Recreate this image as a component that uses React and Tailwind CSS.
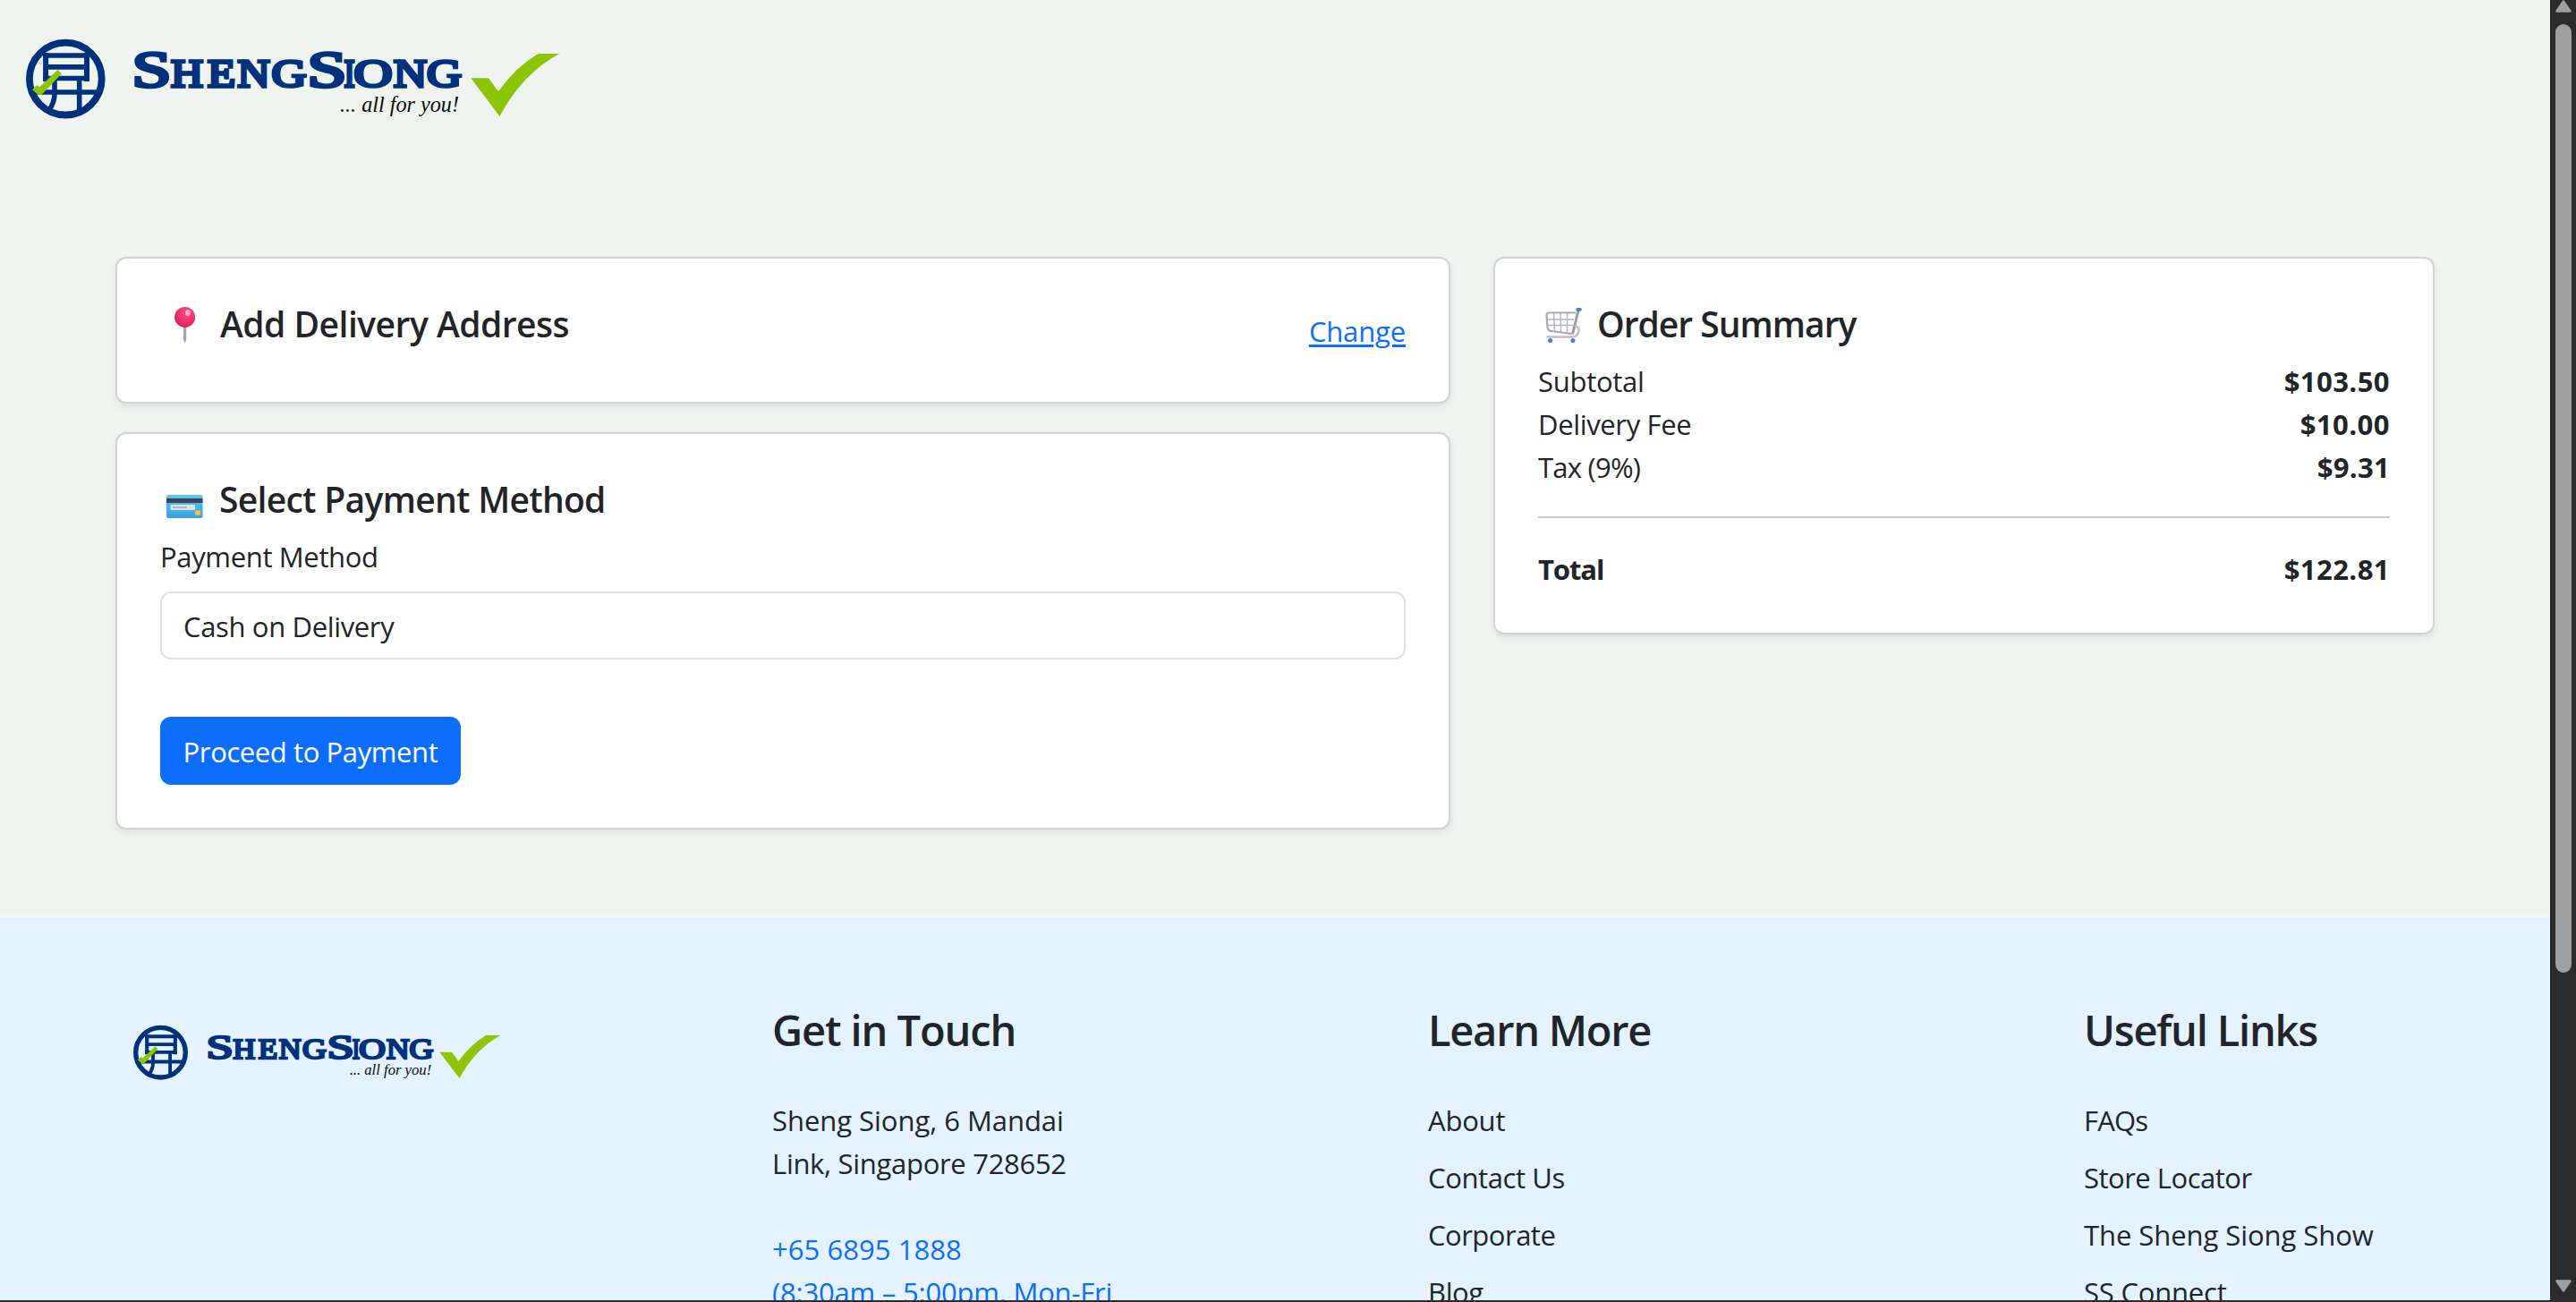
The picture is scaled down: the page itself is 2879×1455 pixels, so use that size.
import React from "react";

// Letter, left edge, advance width and font size of each wordmark glyph.
const WORDMARK = [
  ["S", 147.5, 44, 56],
  ["H", 191, 36, 45],
  ["E", 232, 31, 45],
  ["N", 265.5, 36, 45],
  ["G", 303.5, 39, 45],
  ["S", 343.5, 44, 56],
  ["I", 384.5, 12, 45],
  ["O", 395.5, 43, 45],
  ["N", 440, 37, 45],
  ["G", 477, 39, 45],
];

function Logo({ className }) {
  return (
    <svg viewBox="29 43 597 91" className={className}>
      <g fill="none" stroke="#00317c">
        <circle cx="73.3" cy="88.1" r="40.4" strokeWidth="7.8" />
        <path d="M51.1 91V59M97 91V59" strokeWidth="6" />
        <path d="M48 62H100M50 74.9H98M48 87.5H100M38 103H110M88.7 88V127" strokeWidth="5.6" />
        <path d="M61 90V105Q61 114 55 123" strokeWidth="5.6" />
      </g>
      <path d="M36 100.3L41.3 95.3L44.3 97.3L64.3 78L69 82.3L46.7 105.7H42.3Z" fill="#8cc503" />
      <text
        y="97.3"
        fill="#00317c"
        stroke="#00317c"
        strokeWidth="3.6"
        strokeLinejoin="miter"
        className="font-['Liberation_Serif',serif]"
      >
        {WORDMARK.map(([ch, x, w, size], i) => (
          <tspan key={i} x={x} textLength={w} lengthAdjust="spacingAndGlyphs" fontSize={size}>
            {ch}
          </tspan>
        ))}
      </text>
      <text
        x="380"
        y="124.7"
        fontSize="25"
        textLength="133"
        lengthAdjust="spacingAndGlyphs"
        fill="#0a0a0a"
        className="font-['Liberation_Serif',serif] italic"
      >
        ... all for you!
      </text>
      <path
        d="M526.3 87.3H546L557 102.2Q576 75 601.6 60H625.3Q584 82 558.4 130Z"
        fill="#8cc503"
      />
    </svg>
  );
}

function PinIcon() {
  return (
    <svg viewBox="0 0 55 48" className="h-12 w-[55px] shrink-0">
      <defs>
        <radialGradient id="pin" cx="0.6" cy="0.3" r="0.7">
          <stop offset="0" stopColor="#ff4a80" />
          <stop offset="0.6" stopColor="#f5316d" />
          <stop offset="1" stopColor="#c9285c" />
        </radialGradient>
      </defs>
      <path d="M26 28H29.2V43L27.7 46L26 43Z" fill="#a99db3" />
      <circle cx="27.6" cy="17.4" r="11.5" fill="url(#pin)" />
      <ellipse cx="31" cy="12.5" rx="3" ry="3.6" fill="#ffc4d8" opacity="0.85" />
    </svg>
  );
}

function CardIcon() {
  return (
    <svg viewBox="0 0 55 48" className="h-12 w-[55px] shrink-0">
      <defs>
        <linearGradient id="card" x1="0" y1="0" x2="0" y2="1">
          <stop offset="0" stopColor="#4fd0ee" />
          <stop offset="1" stopColor="#37a0e4" />
        </linearGradient>
      </defs>
      <rect x="7" y="20" width="40.5" height="26" rx="2.5" fill="url(#card)" />
      <rect x="7" y="24" width="40.5" height="5" fill="#483f58" />
      <rect x="11.5" y="31" width="27.5" height="6" rx="1" fill="#dfe0ea" />
      <path d="M14 34H30" stroke="#a29bab" strokeWidth="1.3" />
      <rect x="39" y="37.5" width="6" height="5.2" rx="1" fill="#f5c43a" />
    </svg>
  );
}

function CartIcon() {
  return (
    <svg viewBox="0 0 55 48" className="h-12 w-[55px] shrink-0" fill="none">
      <path d="M10.5 20H40M11 26.5H39M17.5 13L18.5 33M25 13L25.5 34M32.5 13L32.5 35" stroke="#b7b4bd" strokeWidth="1.5" />
      <path d="M42 12.5H13Q9.3 12.5 9.5 16L10.5 29Q11 32.5 14.5 33L37.5 36" stroke="#aaa7af" strokeWidth="2.2" />
      <path d="M45 10L38.5 36.5" stroke="#9c98a2" strokeWidth="3" />
      <path d="M41 27Q46.5 28 45.5 33Q44 39.5 38 39.5H9.5" stroke="#c6b9d2" strokeWidth="2.6" />
      <path d="M42.5 10L45.5 8" stroke="#8896b4" strokeWidth="3" />
      <rect x="42.8" y="7" width="6" height="3.8" rx="1.8" fill="#3f82d4" />
      <circle cx="13.5" cy="43.5" r="2.5" fill="#3f82d4" />
      <circle cx="39" cy="43.5" r="2.5" fill="#3f82d4" />
    </svg>
  );
}

function Card({ children }) {
  return (
    <section className="rounded-xl border-2 border-[#d2d3d3] bg-white p-12 shadow-[0_4px_8px_rgba(0,0,0,0.075)]">
      {children}
    </section>
  );
}

function CardTitle({ icon, children, className }) {
  return (
    <div className="mb-4 flex h-12">
      {icon}
      <h5 className={`h-12 text-[39px] leading-[50px] font-semibold ${className}`}>{children}</h5>
    </div>
  );
}

function Row({ label, value, labelClass = "", valueClass = "" }) {
  return (
    <div className="flex h-12 justify-between leading-[50px]">
      <span className={labelClass}>{label}</span>
      <span className={`font-bold ${valueClass}`}>{value}</span>
    </div>
  );
}

function FooterColumn({ title, titleClass, children }) {
  return (
    <div className="w-[733px] shrink-0">
      <h4 className={`mb-[49px] h-[58px] text-[47px] leading-[62px] font-semibold ${titleClass}`}>{title}</h4>
      {children}
    </div>
  );
}

function LinkList({ items }) {
  return (
    <ul className="flex flex-col gap-4">
      {items.map(([label, tracking]) => (
        <li key={label} className={`h-12 leading-[50px] ${tracking}`}>
          {label}
        </li>
      ))}
    </ul>
  );
}

function Scrollbar() {
  return (
    <div className="flex h-full w-[29px] shrink-0 flex-col items-center bg-[#2b2b2b]">
      <svg viewBox="0 0 18 14" className="h-3.5 w-[18px]">
        <path d="M9 1.5L16.5 12.5H1.5Z" fill="#9f9f9f" stroke="#9f9f9f" strokeWidth="2.5" strokeLinejoin="round" />
      </svg>
      <div className="mt-[13px] h-[1060px] w-[18px] rounded-full bg-[#9f9f9f]" />
      <svg viewBox="0 0 18 14" className="mt-[343px] h-3.5 w-[18px]">
        <path d="M9 12.5L16.5 1.5H1.5Z" fill="#9f9f9f" stroke="#9f9f9f" strokeWidth="2.5" strokeLinejoin="round" />
      </svg>
    </div>
  );
}

export default function App() {
  return (
    <div className="h-[1455px] w-[2879px] overflow-hidden bg-[#2b2b2b] font-['Open_Sans','Noto_Sans',sans-serif] text-[31px] text-[#212529]">
      <div className="flex h-[1453px] overflow-hidden">
        <div className="h-full w-[2850px] shrink-0 overflow-hidden bg-[#eff4f0]">
          <header className="h-[287px] pt-[43px] pl-[29px]">
            <Logo className="h-[91px] w-[597px]" />
          </header>

          <main className="flex h-[736px] items-start gap-12 px-[129px]">
            <div className="flex w-[1492px] flex-col gap-8">
              <Card>
                <div className="flex items-center justify-between">
                  <CardTitle icon={<PinIcon />} className="ml-3 tracking-[-0.5px]">
                    Add Delivery Address
                  </CardTitle>
                  <a className="h-12 leading-[50px] tracking-[-0.15px] text-[#0d6efd] underline decoration-[2.5px] underline-offset-[3px]">
                    Change
                  </a>
                </div>
              </Card>
              <Card>
                <CardTitle icon={<CardIcon />} className="ml-[11px] tracking-[-0.7px]">
                  Select Payment Method
                </CardTitle>
                <label className="mb-4 block h-12 leading-[50px] tracking-[-0.35px]">Payment Method</label>
                <div className="h-[76px] rounded-xl border-2 border-[#dee2e6] px-6 py-3 leading-[50px] tracking-[-0.35px]">
                  Cash on Delivery
                </div>
                <button className="mt-16 block h-[76px] w-[336px] rounded-xl bg-[#0d6efd] leading-[78px] tracking-[-0.4px] text-white">
                  Proceed to Payment
                </button>
              </Card>
            </div>

            <div className="w-[1052px]">
              <Card>
                <CardTitle icon={<CartIcon />} className="ml-[11px] tracking-[-0.98px]">
                  Order Summary
                </CardTitle>
                <Row label="Subtotal" labelClass="tracking-[-0.27px]" value="$103.50" valueClass="tracking-[0.45px]" />
                <Row label="Delivery Fee" labelClass="tracking-[-0.35px]" value="$10.00" valueClass="tracking-[0.48px]" />
                <Row label="Tax (9%)" labelClass="tracking-[-0.75px]" value="$9.31" valueClass="tracking-[0.3px]" />
                <hr className="my-8 border-t-2 border-[#c8c9ca]" />
                <Row
                  label="Total"
                  labelClass="font-bold tracking-[-1.1px]"
                  value="$122.81"
                  valueClass="tracking-[0.45px]"
                />
              </Card>
            </div>
          </main>

          <footer className="flex h-[432px] border-t-2 border-[#f4f7f7] bg-[#e4f3ff] pt-[95px] pl-[130px]">
            <div className="w-[733px] shrink-0 pt-[25px] pl-[19px]">
              <Logo className="h-[63px] w-[411px]" />
            </div>
            <FooterColumn title="Get in Touch" titleClass="tracking-[-1.1px]">
              <p>
                <span className="block h-12 leading-[50px] tracking-[-0.04px]">Sheng Siong, 6 Mandai</span>
                <span className="block h-12 leading-[50px] tracking-[-0.3px]">Link, Singapore 728652</span>
              </p>
              <p className="mt-12 text-[#0d6efd]">
                <span className="block h-12 leading-[50px] tracking-[0.05px]">+65 6895 1888</span>
                <span className="block h-12 leading-[50px] tracking-[-0.2px]">(8:30am – 5:00pm, Mon-Fri</span>
              </p>
            </FooterColumn>
            <FooterColumn title="Learn More" titleClass="tracking-[-1.25px]">
              <LinkList
                items={[
                  ["About", "tracking-[-0.2px]"],
                  ["Contact Us", "tracking-[-0.38px]"],
                  ["Corporate", "tracking-[-0.5px]"],
                  ["Blog", "tracking-[-0.4px]"],
                ]}
              />
            </FooterColumn>
            <FooterColumn title="Useful Links" titleClass="tracking-[-1.2px]">
              <LinkList
                items={[
                  ["FAQs", "tracking-[-0.8px]"],
                  ["Store Locator", "tracking-[-0.5px]"],
                  ["The Sheng Siong Show", "tracking-[-0.06px]"],
                  ["SS Connect", "tracking-[-0.2px]"],
                ]}
              />
            </FooterColumn>
          </footer>
        </div>
        <Scrollbar />
      </div>
    </div>
  );
}
